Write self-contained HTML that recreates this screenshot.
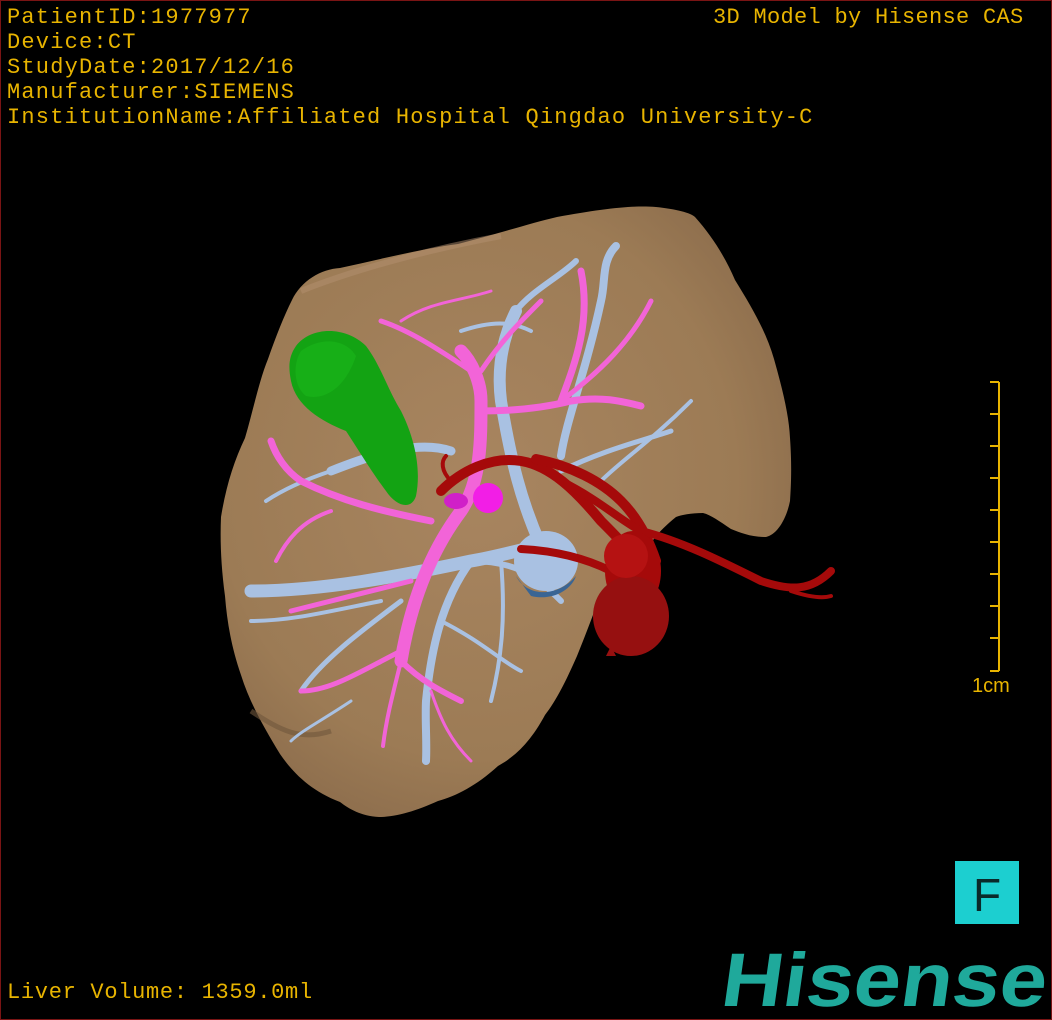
<!DOCTYPE html>
<html><head><meta charset="utf-8"><style>
html,body{margin:0;padding:0;background:#000;}
#w{position:relative;width:1052px;height:1020px;overflow:hidden;background:#000;box-sizing:border-box;border:1px solid #7a1414;}
.t{position:absolute;font-family:"Liberation Mono",monospace;font-size:22px;letter-spacing:1.2px;color:#e8b400;white-space:pre;line-height:25px;}
svg{position:absolute;left:0;top:0;}
</style></head><body><div id="w">
<svg width="1052" height="1020" viewBox="0 0 1052 1020">
<defs>
<radialGradient id="lv" cx="45%" cy="45%" r="65%">
<stop offset="0" stop-color="#a88560"/><stop offset="0.7" stop-color="#9c7b55"/><stop offset="1" stop-color="#88694a"/>
</radialGradient>
</defs>
<path fill="url(#lv)" d="M291,299 C300,280 320,268 339,267 C380,258 420,248 457,243 C500,232 530,222 556,216 C600,208 630,204 655,206 C675,208 690,212 694,216 C712,236 725,258 734,279 C750,305 765,330 773,358 C782,390 788,415 789,437 C791,465 790,485 789,500 C785,520 775,534 765,536 C750,536 740,532 730,528 C718,520 710,514 702,512 C690,512 680,514 675,516 C660,528 650,540 647,548 C625,565 610,580 599,595 C590,620 582,640 576,655 C565,680 555,700 544,714 C530,740 515,755 497,765 C475,785 455,795 437,800 C415,810 395,816 378,816 C360,815 348,808 339,801 C310,790 292,772 279,753 C262,725 248,700 240,674 C230,645 226,620 224,595 C220,565 219,540 220,516 C225,485 233,460 244,437 C252,410 258,380 267,358 C275,335 283,315 291,299Z"/>
<path d="M300,290 C350,270 420,250 500,235" stroke="#b39070" stroke-width="6" fill="none" opacity="0.5"/>
<path d="M250,710 C280,730 300,740 330,730" stroke="#6f563c" stroke-width="5" fill="none" opacity="0.6"/>
<g stroke="#a9c1e2" fill="none" stroke-linecap="round">
<path d="M250,590 C320,590 400,575 470,560 C500,555 520,548 540,545" stroke-width="13"/>
<path d="M540,545 C520,500 510,460 500,400 C495,360 505,330 515,310" stroke-width="12"/>
<path d="M515,310 C530,290 560,275 575,260" stroke-width="6"/>
<path d="M560,455 C565,420 585,370 600,300 C605,280 600,260 615,245" stroke-width="8"/>
<path d="M560,470 C600,450 640,440 670,430" stroke-width="5"/>
<path d="M470,560 C440,600 430,650 425,700 C424,720 426,740 425,760" stroke-width="8"/>
<path d="M470,560 C520,560 540,580 560,600" stroke-width="6"/>
<path d="M330,470 C380,450 420,440 450,450" stroke-width="9"/>
<path d="M330,470 C300,480 280,490 265,500" stroke-width="4"/>
<path d="M400,600 C360,630 320,660 300,690" stroke-width="5"/>
<path d="M380,600 C330,610 290,620 250,620" stroke-width="4"/>
<path d="M440,620 C480,640 500,660 520,670" stroke-width="4"/>
<path d="M350,700 C320,720 300,730 290,740" stroke-width="3"/>
<path d="M500,560 C505,620 500,660 490,700" stroke-width="4"/>
<path d="M460,330 C490,320 510,320 530,330" stroke-width="4"/>
<path d="M600,480 C620,460 650,440 690,400" stroke-width="4"/>
</g>
<ellipse cx="545" cy="560" rx="32" ry="30" fill="#a9c1e2"/>
<path d="M515,575 C525,595 555,598 575,575 C570,590 550,600 530,595Z" fill="#3a6594"/>
<g stroke="#f264d8" fill="none" stroke-linecap="round">
<path d="M400,660 C410,600 430,550 460,510 C480,480 480,440 480,400 C480,380 470,360 460,350" stroke-width="13"/>
<path d="M480,410 C520,410 550,405 570,400 C600,395 620,400 640,405" stroke-width="7"/>
<path d="M560,400 C575,360 590,320 580,270" stroke-width="7"/>
<path d="M560,400 C600,370 630,340 650,300" stroke-width="5"/>
<path d="M470,370 C440,350 410,330 380,320" stroke-width="5"/>
<path d="M480,370 C500,340 520,320 540,300" stroke-width="5"/>
<path d="M430,520 C380,510 340,500 300,480 C285,470 275,455 270,440" stroke-width="7"/>
<path d="M330,510 C300,520 285,540 275,560" stroke-width="4"/>
<path d="M410,580 C370,590 330,600 290,610" stroke-width="5"/>
<path d="M400,650 C360,670 330,690 300,690" stroke-width="5"/>
<path d="M400,660 C420,680 440,690 460,700" stroke-width="6"/>
<path d="M400,660 C390,700 385,720 382,745" stroke-width="4"/>
<path d="M430,690 C440,720 450,740 470,760" stroke-width="3"/>
<path d="M400,320 C430,300 460,300 490,290" stroke-width="3"/>
</g>
<circle cx="487" cy="497" r="15" fill="#f21ee6"/>
<ellipse cx="455" cy="500" rx="12" ry="8" fill="#d020c8"/>
<path d="M295,345 C310,325 345,325 365,345 C380,365 385,385 400,410 C415,440 420,470 415,495 C410,510 395,505 385,490 C370,470 355,445 345,430 C320,420 295,405 290,380 C287,365 288,355 295,345Z" fill="#13a313"/>
<path d="M300,350 C320,335 345,338 355,355 C345,385 325,400 305,395 C292,385 292,362 300,350Z" fill="#1bb81b" opacity="0.6"/>
<g stroke="#a50a0a" fill="none" stroke-linecap="round">
<path d="M440,490 C460,470 490,455 520,460 C550,465 575,490 600,520 C615,535 625,545 635,560" stroke-width="10"/>
<path d="M535,458 C570,465 600,480 620,500 C640,520 650,545 655,560" stroke-width="10"/>
<path d="M560,480 C600,500 620,520 640,530 C680,540 720,560 760,580 C790,590 810,590 830,570" stroke-width="8"/>
<path d="M520,548 C560,550 590,560 610,570" stroke-width="8"/>
<path d="M790,590 C805,595 820,598 830,595" stroke-width="4"/>
<path d="M450,480 C440,470 440,460 445,455" stroke-width="4"/>
</g>
<ellipse cx="632" cy="570" rx="28" ry="40" fill="#a50a0a"/>
<ellipse cx="630" cy="615" rx="38" ry="40" fill="#961010"/>
<ellipse cx="625" cy="555" rx="22" ry="22" fill="#b51212"/>
<path d="M605,655 L610,645 L615,655Z" fill="#961010"/>
<g stroke="#e8b400" stroke-width="2">
<line x1="998" y1="381" x2="998" y2="670"/>
<line x1="989" y1="381" x2="998" y2="381"/><line x1="989" y1="413" x2="998" y2="413"/><line x1="989" y1="445" x2="998" y2="445"/><line x1="989" y1="477" x2="998" y2="477"/><line x1="989" y1="509" x2="998" y2="509"/><line x1="989" y1="541" x2="998" y2="541"/><line x1="989" y1="573" x2="998" y2="573"/><line x1="989" y1="605" x2="998" y2="605"/><line x1="989" y1="637" x2="998" y2="637"/><line x1="989" y1="670" x2="998" y2="670"/>
</g>
<text x="971" y="691" font-family="Liberation Sans,sans-serif" font-size="20" fill="#e8b400">1cm</text>
<rect x="954" y="860" width="64" height="63" fill="#1ccfd0"/>
<text x="986" y="910" text-anchor="middle" font-family="Liberation Sans,sans-serif" font-size="46" fill="#0a2a2a">F</text>
<g transform="translate(718,1005) skewX(-8)">
<text x="0" y="0" font-family="Liberation Sans,sans-serif" font-weight="bold" font-size="76" fill="#1fa99b" textLength="325" lengthAdjust="spacingAndGlyphs">Hisense</text>
</g>
</svg>
<div class="t" style="left:6px;top:4px">PatientID:1977977
Device:CT
StudyDate:2017/12/16
Manufacturer:SIEMENS
InstitutionName:Affiliated Hospital Qingdao University-C</div>
<div class="t" style="left:712px;top:4px;letter-spacing:0.3px">3D Model by Hisense CAS</div>
<div class="t" style="left:6px;top:979px;letter-spacing:0.7px">Liver Volume: 1359.0ml</div>
</div></body></html>
